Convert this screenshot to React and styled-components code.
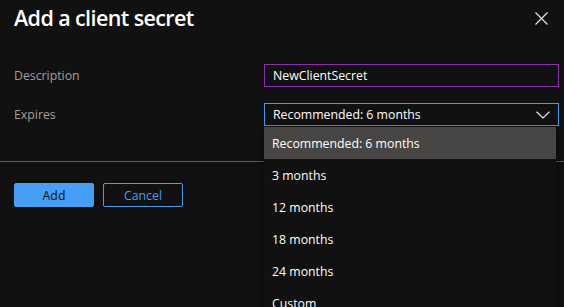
import styled, { createGlobalStyle } from "styled-components";

const GlobalStyle = createGlobalStyle`
  html, body {
    margin: 0;
    background: #111111;
    font-family: "Open Sans", "Noto Sans", sans-serif;
    color: #ffffff;
    overflow: hidden;
  }
`;

const Panel = styled.div`
  width: 564px;
  height: 307px;
  background: #111111;
  position: relative;
`;

const Header = styled.div`
  display: flex;
  align-items: flex-start;
  justify-content: space-between;
  padding: 2px 14px 0 14px;
  height: 40px;
`;

const Title = styled.h1`
  margin: 0;
  font-size: 21.5px;
  font-weight: 600;
  line-height: 32px;
  letter-spacing: -0.6px;
`;

const Close = styled.button`
  background: none;
  border: none;
  padding: 0;
  margin-top: 10px;
  margin-right: 1px;
  width: 14px;
  height: 14px;
  color: #e6e6e6;
  display: flex;
`;

const Form = styled.div`
  display: flex;
  flex-direction: column;
  gap: 16px;
  padding: 22px 5px 35px 14px;
`;

const Row = styled.div`
  display: grid;
  grid-template-columns: 250px 1fr;
  align-items: center;
`;

const Label = styled.label`
  font-size: 12.3px;
  color: #a19f9d;
`;

const Field = styled.div`
  position: relative;
  height: 23px;
  box-sizing: border-box;
  border: 1px solid ${(p) => p.$border};
  display: flex;
  align-items: center;
  justify-content: space-between;
  padding: 0 8px 0 8px;
  font-size: 12.3px;
  color: #ffffff;
`;

const Dropdown = styled.ul`
  position: absolute;
  top: 23px;
  left: -1px;
  width: 292px;
  margin: 0;
  padding: 0;
  list-style: none;
  background: #111111;
  box-shadow: 0 4px 10px rgba(0, 0, 0, 0.6);
  z-index: 2;
`;

const Option = styled.li`
  height: 32px;
  display: flex;
  align-items: center;
  padding-left: 8px;
  font-size: 12.3px;
  color: #ffffff;
  background: ${(p) => (p.$selected ? "#484644" : "transparent")};
`;

const Divider = styled.hr`
  margin: 0;
  border: none;
  border-top: 1px solid #605e5c;
`;

const Footer = styled.div`
  display: flex;
  gap: 9px;
  padding: 21px 14px 0 14px;
`;

const Button = styled.button`
  width: 80px;
  height: 24px;
  box-sizing: border-box;
  border-radius: 2px;
  border: 1px solid #479ef5;
  background: ${(p) => (p.$primary ? "#479ef5" : "transparent")};
  color: ${(p) => (p.$primary ? "#111111" : "#479ef5")};
  font-family: "Open Sans", "Noto Sans", sans-serif;
  font-size: 12.3px;
  padding: 0;
`;

const options = ["Recommended: 6 months", "3 months", "12 months", "18 months", "24 months", "Custom"];

export default function App() {
  return (
    <Panel>
      <GlobalStyle />
      <Header>
        <Title>Add a client secret</Title>
        <Close aria-label="Close">
          <svg width="13" height="13" viewBox="0 0 13 13" fill="none" stroke="currentColor" strokeWidth="1.2">
            <path d="M0.5 0.5 L12.5 12.5 M12.5 0.5 L0.5 12.5" />
          </svg>
        </Close>
      </Header>
      <Form>
        <Row>
          <Label>Description</Label>
          <Field $border="#8a2fb0">NewClientSecret</Field>
        </Row>
        <Row>
          <Label>Expires</Label>
          <Field $border="#3a9bef">
            Recommended: 6 months
            <svg width="14" height="8" viewBox="0 0 14 8" fill="none" stroke="#e6e6e6" strokeWidth="1.2">
              <path d="M0.5 0.8 L7 7 L13.5 0.8" />
            </svg>
            <Dropdown>
              {options.map((o, i) => (
                <Option key={o} $selected={i === 0}>
                  {o}
                </Option>
              ))}
            </Dropdown>
          </Field>
        </Row>
      </Form>
      <Divider />
      <Footer>
        <Button $primary>Add</Button>
        <Button>Cancel</Button>
      </Footer>
    </Panel>
  );
}
